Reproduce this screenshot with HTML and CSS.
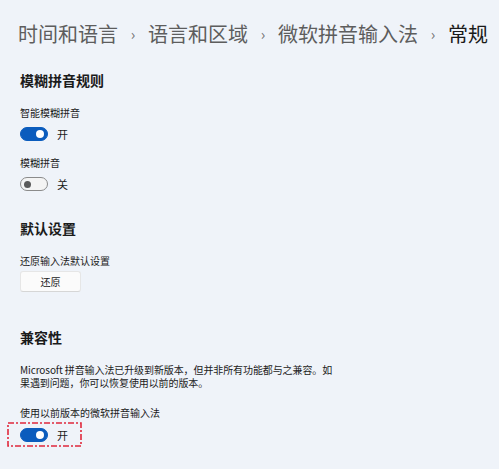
FILE: index.html
```html
<!DOCTYPE html>
<html lang="zh-CN">
<head>
    <meta charset="UTF-8">
    <meta name="viewport" content="width=device-width, initial-scale=1.0">
    <title>常规 - 微软拼音输入法</title>
    <link rel="stylesheet" href="styles.css">
</head>
<body>

<div class="page">
    <!-- Breadcrumb -->
    <div class="crumbs">
        <span>时间和语言</span>
        <span class="sep">›</span>
        <span>语言和区域</span>
        <span class="sep">›</span>
        <span>微软拼音输入法</span>
        <span class="sep">›</span>
        <span class="current">常规</span>
    </div>

    <!-- Fuzzy pinyin -->
    <div class="group first">
        <h3>模糊拼音规则</h3>
        <div class="label">智能模糊拼音</div>
        <div class="switch-row">
            <span class="switch on"><span class="knob"></span></span>
            <span class="state">开</span>
        </div>
        <div class="label">模糊拼音</div>
        <div class="switch-row">
            <span class="switch"><span class="knob"></span></span>
            <span class="state">关</span>
        </div>
    </div>

    <!-- Defaults -->
    <div class="group">
        <h3>默认设置</h3>
        <div class="label">还原输入法默认设置</div>
        <button class="btn">还原</button>
    </div>

    <!-- Compatibility -->
    <div class="group compat">
        <h3>兼容性</h3>
        <p class="desc">Microsoft 拼音输入法已升级到新版本，但并非所有功能都与之兼容。如果遇到问题，你可以恢复使用以前的版本。</p>
        <div class="label">使用以前版本的微软拼音输入法</div>
        <div class="marked">
            <svg class="mark" width="75" height="25" viewBox="0 0 75 25">
                <rect x="1" y="1" width="73" height="23" fill="none" stroke="#e0283c" stroke-width="1.6" stroke-dasharray="6 2 2 2"/>
            </svg>
            <div class="switch-row">
                <span class="switch on"><span class="knob"></span></span>
                <span class="state">开</span>
            </div>
        </div>
    </div>
</div>

</body>
</html>
```

FILE: styles.css
```css
body {
    margin: 0;
    background-color: #eff3f9;
    font-family: "Noto Sans CJK SC", "Noto Sans", sans-serif;
    color: #1b1b1b;
}
.page {
    padding: 0 0 0 20px;
}
.crumbs {
    display: flex;
    align-items: center;
    margin-left: -2px;
    padding-top: 20px;
    font-size: 20px;
    line-height: 28px;
    color: #5d5d5d;
    white-space: nowrap;
}
.crumbs .sep {
    width: 30px;
    text-align: center;
    font-size: 15px;
    color: #707070;
}
.crumbs .current {
    color: #1a1a1a;
}
h3 {
    margin: 0;
    font-size: 14px;
    line-height: 20px;
    font-weight: 600;
}
.group {
    margin-top: 27px;
}
.group.first {
    margin-top: 22px;
}
.group.compat {
    margin-top: 35px;
}
.label {
    margin-top: 9px;
    font-size: 10px;
    line-height: 14px;
}
h3 + .label {
    margin-top: 16px;
}
.switch-row {
    display: flex;
    align-items: center;
    height: 14px;
    margin: 7px 0 15px;
}
.switch {
    box-sizing: border-box;
    display: flex;
    align-items: center;
    width: 28px;
    height: 14px;
    padding: 0 3px;
    border: 1px solid #8b8b8b;
    border-radius: 7px;
    background-color: #f4f4f4;
}
.switch .knob {
    width: 7px;
    height: 7px;
    border-radius: 50%;
    background-color: #5a5a5a;
}
.switch.on {
    justify-content: flex-end;
    border-color: #0b5cbd;
    background-color: #0b5cbd;
}
.switch.on .knob {
    width: 8px;
    height: 8px;
    background-color: white;
}
.state {
    margin-left: 9px;
    font-size: 11px;
}
.btn {
    display: block;
    margin-top: 3px;
    width: 61px;
    height: 21px;
    padding: 0;
    font-family: inherit;
    font-size: 10px;
    color: #1b1b1b;
    background-color: #fbfbfb;
    border: 1px solid #e6e6e6;
    border-bottom-color: #d6d6d6;
    border-radius: 3px;
}
.desc {
    margin: 16px 0 0;
    width: 314px;
    font-size: 10px;
    line-height: 13px;
    letter-spacing: -0.1px;
}
.desc + .label {
    margin-top: 17px;
}
.marked {
    position: relative;
    width: 75px;
    height: 25px;
    margin: 2px 0 0 -13px;
    padding-left: 13px;
    box-sizing: border-box;
    display: flex;
    align-items: center;
}
.marked .mark {
    position: absolute;
    left: 0;
    top: 0;
}
.marked .switch-row {
    margin: 0;
}
```
